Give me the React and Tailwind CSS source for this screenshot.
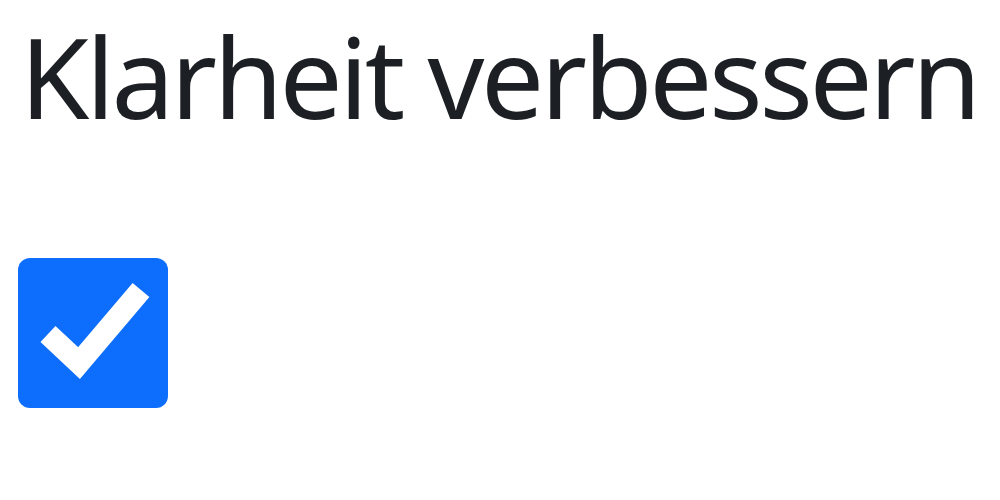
export default function App() {
  return (
    <div className="w-[1000px] h-[500px] bg-white overflow-hidden">
      <div className="pl-[20px] pt-[16px]">
        <h1
          style={{ fontFamily: "'Noto Sans', sans-serif" }}
          className="text-[112px] leading-[120px] tracking-[-3.4px] text-[#1c1f23] font-normal whitespace-nowrap"
        >
          Klarheit verbessern
        </h1>
      </div>
      <div className="pl-[18px] mt-[122px]">
        <div className="w-[150px] h-[150px] rounded-[12px] bg-[#0d6efd] flex items-center justify-center">
          <svg width="150" height="150" viewBox="0 0 150 150">
            <path d="M30 76 L61 105 L123 32" fill="none" stroke="#fff" strokeWidth="22" strokeLinejoin="miter" />
          </svg>
        </div>
      </div>
    </div>
  )
}
